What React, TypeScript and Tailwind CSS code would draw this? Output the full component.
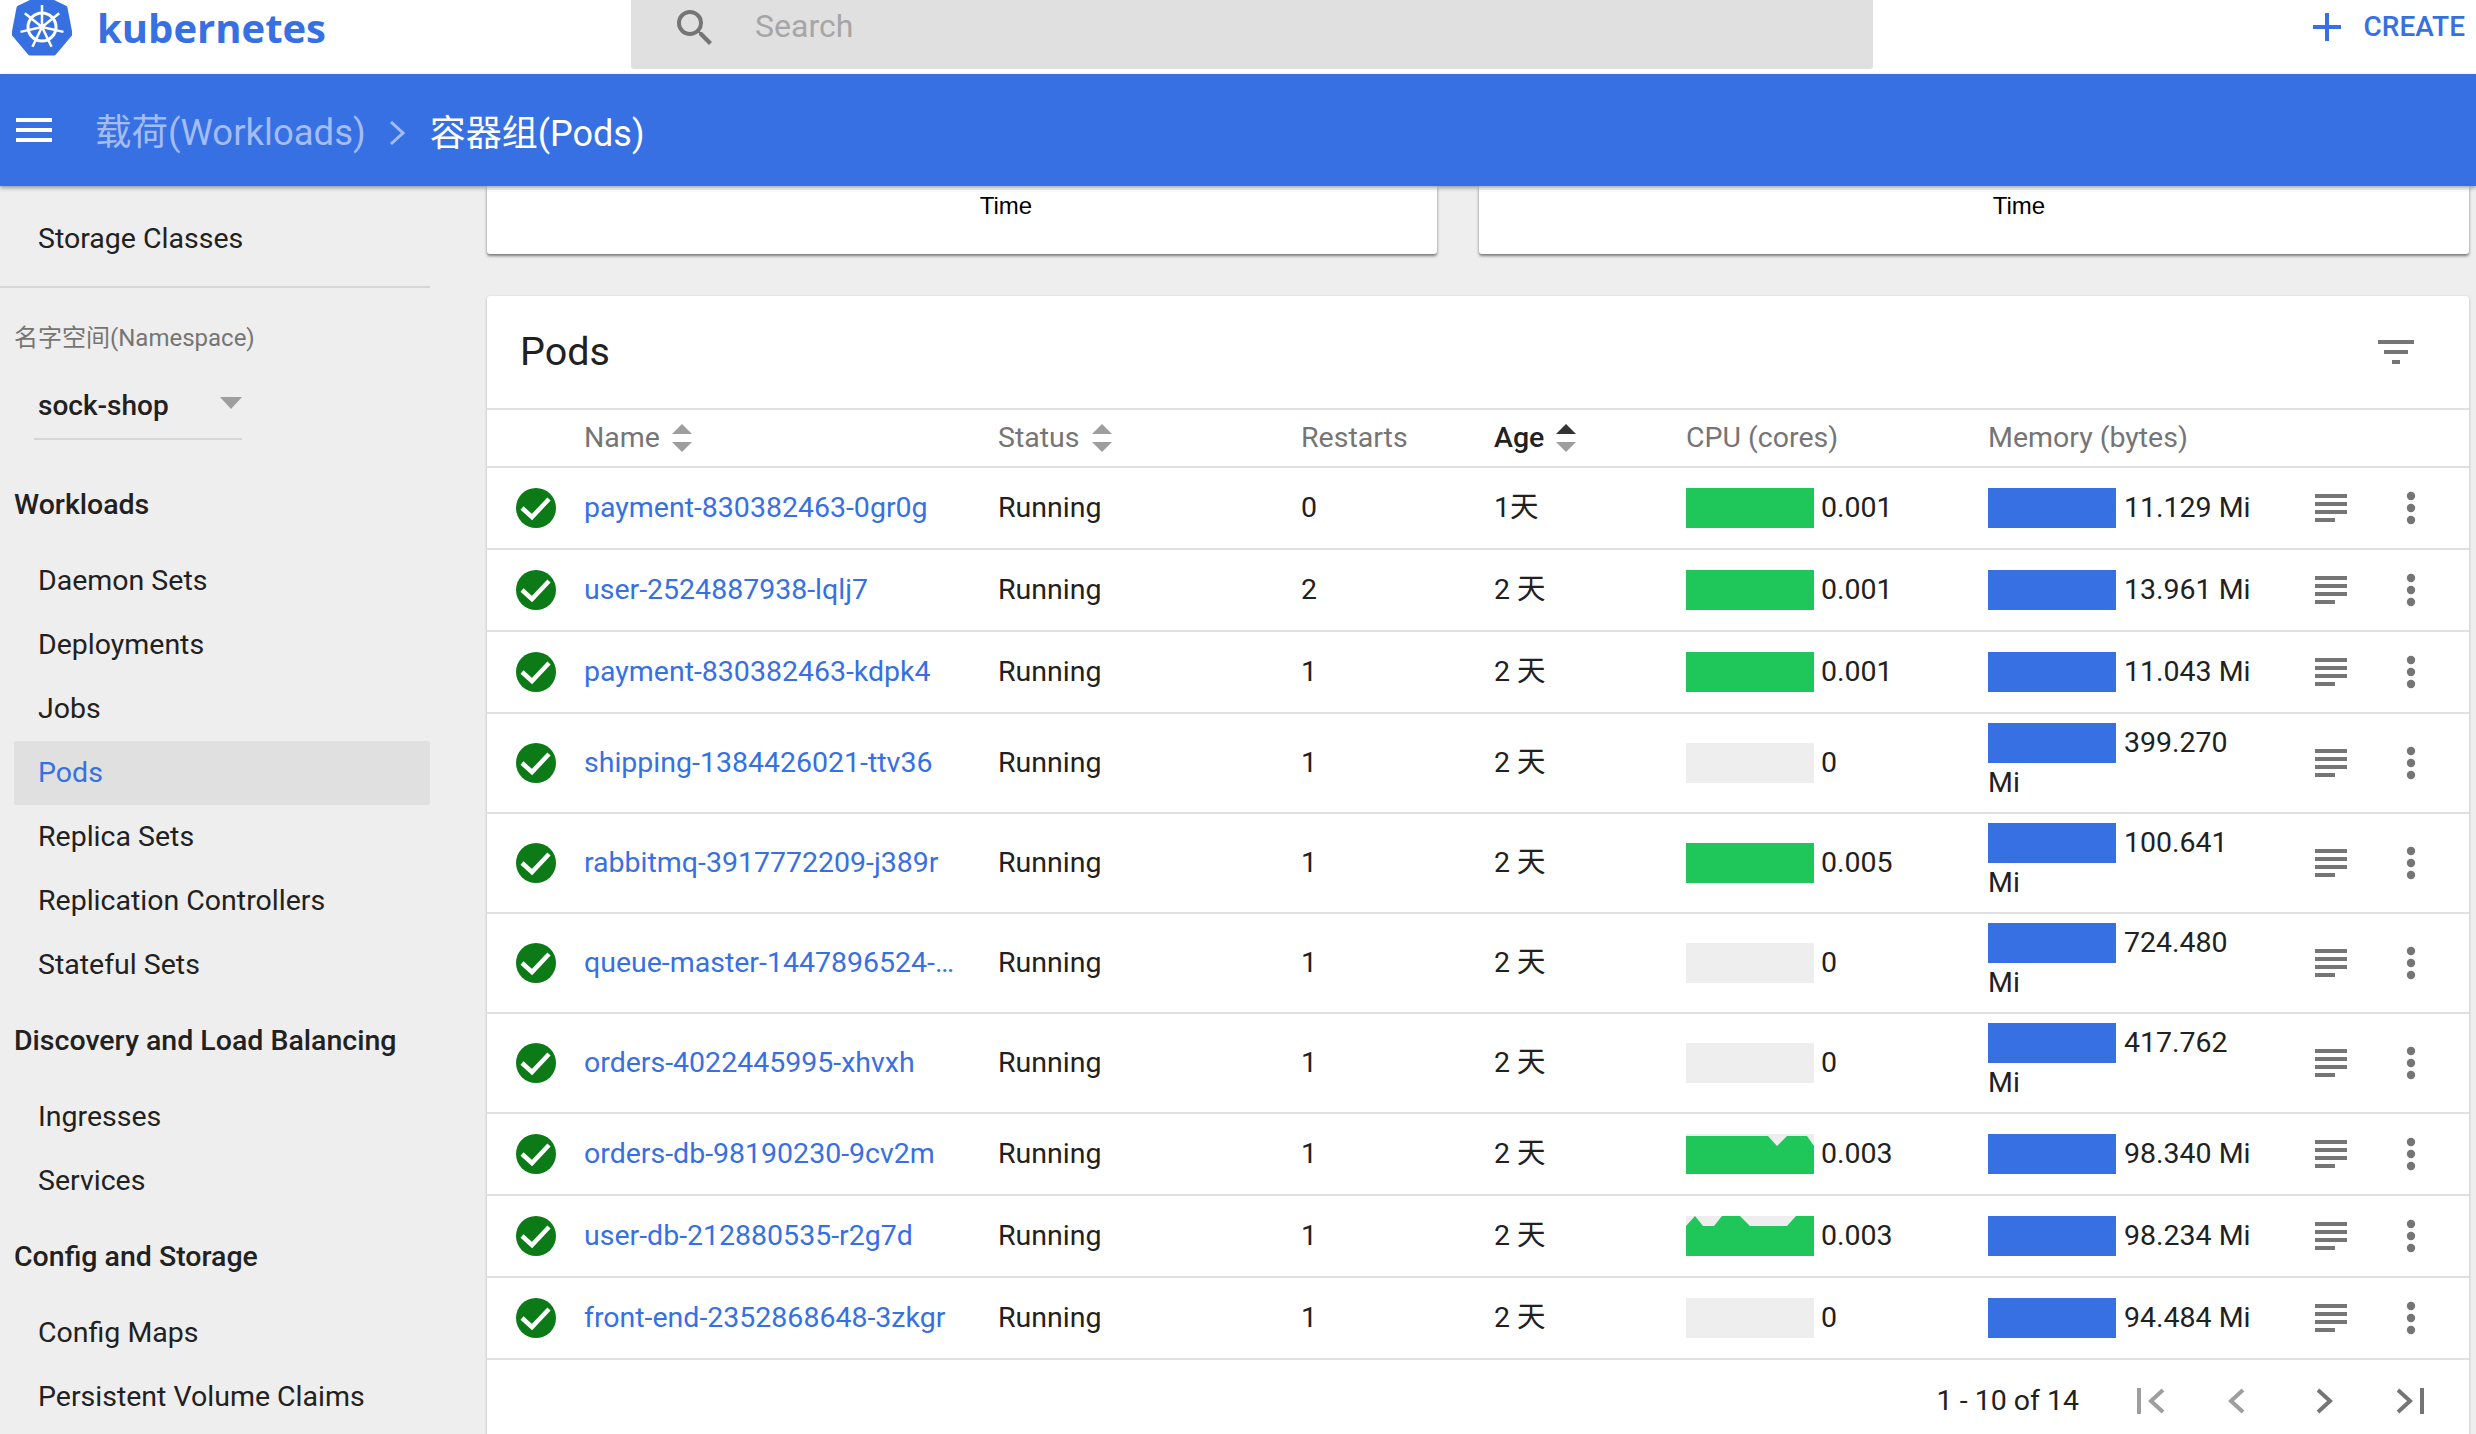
import React from 'react';

const COLS = 'grid grid-cols-[97px_414px_303px_193px_192px_302px_327px_1fr] items-center';

const NOTCH = '0,2 82,2 91,12 101,2 121,2 128,12 128,40 0,40';
const WAVY = '0,10 9,0 17,10 28,10 36,0 54,0 64,10 101,10 110,0 128,0 128,40 0,40';

type Pod = { name: string; restarts: number; age: string; cpu: string; mem: string; spark?: string | null };

const PODS: Pod[] = [
  { name: 'payment-830382463-0gr0g', restarts: 0, age: '1天', cpu: '0.001', mem: '11.129 Mi', spark: 'full' },
  { name: 'user-2524887938-lqlj7', restarts: 2, age: '2 天', cpu: '0.001', mem: '13.961 Mi', spark: 'full' },
  { name: 'payment-830382463-kdpk4', restarts: 1, age: '2 天', cpu: '0.001', mem: '11.043 Mi', spark: 'full' },
  { name: 'shipping-1384426021-ttv36', restarts: 1, age: '2 天', cpu: '0', mem: '399.270 Mi' },
  { name: 'rabbitmq-3917772209-j389r', restarts: 1, age: '2 天', cpu: '0.005', mem: '100.641 Mi', spark: 'full' },
  { name: 'queue-master-1447896524-…', restarts: 1, age: '2 天', cpu: '0', mem: '724.480 Mi' },
  { name: 'orders-4022445995-xhvxh', restarts: 1, age: '2 天', cpu: '0', mem: '417.762 Mi' },
  { name: 'orders-db-98190230-9cv2m', restarts: 1, age: '2 天', cpu: '0.003', mem: '98.340 Mi', spark: NOTCH },
  { name: 'user-db-212880535-r2g7d', restarts: 1, age: '2 天', cpu: '0.003', mem: '98.234 Mi', spark: WAVY },
  { name: 'front-end-2352868648-3zkgr', restarts: 1, age: '2 天', cpu: '0', mem: '94.484 Mi' },
];

// 로고
function Logo() {
  const spokes = [0, 1, 2, 3, 4, 5, 6].map((i) => (i * 360) / 7);
  return (
    <svg width="60" height="56" viewBox="12 0 60 56" className="shrink-0 overflow-hidden">
      <polygon
        points="42,-3 65,8 70,34 54,53 30,53 14,34 19,8"
        fill="#3670e2"
        stroke="#3670e2"
        strokeWidth="5"
        strokeLinejoin="round"
      />
      <circle cx="42" cy="27" r="14" fill="none" stroke="#fff" strokeWidth="3" />
      <circle cx="42" cy="27" r="3" fill="#fff" />
      {spokes.map((a) => (
        <line key={a} x1="42" y1="27" x2="42" y2="5" stroke="#fff" strokeWidth="2.5" transform={`rotate(${a} 42 27)`} />
      ))}
    </svg>
  );
}

function SortArrows({ active }: { active?: boolean }) {
  return (
    <svg width="20" height="28" viewBox="0 0 20 28" className="ml-[12px] shrink-0">
      <polygon points="10,0 20,10 0,10" fill={active ? '#333333' : '#9e9e9e'} />
      <polygon points="0,18 20,18 10,28" fill="#9e9e9e" />
    </svg>
  );
}

function CheckIcon() {
  return (
    <svg width="40" height="40" viewBox="0 0 40 40">
      <circle cx="20" cy="20" r="20" fill="#0b7a17" />
      <polyline points="6,20 16,29 33,11" fill="none" stroke="#fff" strokeWidth="4.5" />
    </svg>
  );
}

function Spark({ shape, color }: { shape?: string | null; color: string }) {
  return (
    <svg width="128" height="40" viewBox="0 0 128 40" className="inline-block align-top bg-[#eeeeee]">
      {shape === 'full' && <rect width="128" height="40" fill={color} />}
      {shape && shape !== 'full' && <polygon points={shape} fill={color} />}
    </svg>
  );
}

function ListIcon() {
  return (
    <svg width="32" height="28" viewBox="0 0 32 28" fill="#757575">
      <rect y="0" width="32" height="4" />
      <rect y="8" width="32" height="4" />
      <rect y="16" width="32" height="4" />
      <rect y="24" width="20" height="4" />
    </svg>
  );
}

function DotsIcon() {
  return (
    <svg width="10" height="34" viewBox="0 0 10 34" fill="#757575">
      <circle cx="5" cy="5" r="4.2" />
      <circle cx="5" cy="17" r="4.2" />
      <circle cx="5" cy="29" r="4.2" />
    </svg>
  );
}

function PodRow({ pod }: { pod: Pod }) {
  return (
    <div className={`${COLS} min-h-[82px] py-[9px] border-b-2 border-[#e0e0e0] text-[28.5px] text-[#212121]`}>
      <div className="pl-[29px] flex">
        <CheckIcon />
      </div>
      <a className="text-[#3670e2] whitespace-nowrap">{pod.name}</a>
      <div>Running</div>
      <div>{pod.restarts}</div>
      <div>{pod.age}</div>
      <div className="leading-[40px] whitespace-nowrap">
        <Spark shape={pod.spark} color="#1fc65a" />
        <span className="ml-[7px]">{pod.cpu}</span>
      </div>
      <div className="w-[270px] leading-[40px]">
        <Spark shape="full" color="#3670e2" />
        <span className="ml-[8px]">{pod.mem}</span>
      </div>
      <div className="flex items-center">
        <ListIcon />
        <div className="ml-[59px] flex">
          <DotsIcon />
        </div>
      </div>
    </div>
  );
}

function NavItem({ label, active }: { label: string; active?: boolean }) {
  return (
    <div
      className={[
        'h-[64px] flex items-center pl-[24px] ml-[14px] w-[416px] text-[28.5px] rounded-[2px]',
        active ? 'bg-[#e0e0e0] text-[#3670e2]' : 'text-[#212121]',
      ].join(' ')}
    >
      {label}
    </div>
  );
}

function NavTitle({ label }: { label: string }) {
  return <div className="h-[64px] flex items-center pl-[14px] text-[28.5px] font-medium text-[#212121]">{label}</div>;
}

function Sidebar() {
  return (
    <aside className="w-[487px] shrink-0 pt-[21px]">
      <NavItem label="Storage Classes" />
      <div className="h-[2px] w-[430px] mt-[15px] bg-[#d6d6d6]" />
      <div className="mt-[34px] pl-[14px] text-[24px] leading-[32px] text-[#757575]">名字空间(Namespace)</div>
      <div className="ml-[34px] mt-[20px] w-[208px] h-[66px] border-b-2 border-[#d6d6d6] pl-[4px] flex items-center justify-between text-[28px] font-medium text-[#212121]">
        sock-shop
        <svg width="22" height="12" viewBox="0 0 22 12" className="mb-[6px]">
          <polygon points="0,0 22,0 11,12" fill="#9e9e9e" />
        </svg>
      </div>
      <div className="mt-[33px]">
        <NavTitle label="Workloads" />
      </div>
      <div className="mt-[12px]">
        <NavItem label="Daemon Sets" />
        <NavItem label="Deployments" />
        <NavItem label="Jobs" />
        <NavItem label="Pods" active />
        <NavItem label="Replica Sets" />
        <NavItem label="Replication Controllers" />
        <NavItem label="Stateful Sets" />
      </div>
      <div className="mt-[12px]">
        <NavTitle label="Discovery and Load Balancing" />
      </div>
      <div className="mt-[12px]">
        <NavItem label="Ingresses" />
        <NavItem label="Services" />
      </div>
      <div className="mt-[12px]">
        <NavTitle label="Config and Storage" />
      </div>
      <div className="mt-[12px]">
        <NavItem label="Config Maps" />
        <NavItem label="Persistent Volume Claims" />
      </div>
    </aside>
  );
}

function ChartTail({ className }: { className: string }) {
  return (
    <div className={`${className} h-[68px] bg-white rounded-b-[3px] shadow-[0_2px_3px_rgba(0,0,0,0.5)] text-center text-black text-[24px] leading-[39px] [font-family:'Liberation_Sans',sans-serif]`}>
      Time
    </div>
  );
}

export default function App() {
  return (
    <div className="h-[1434px] w-[2476px] overflow-hidden bg-[#eeeeee] flex flex-col [font-family:Roboto,'Noto_Sans_CJK_SC',sans-serif]">
      {/* top bar */}
      <header className="h-[74px] bg-white flex items-start shrink-0">
        <div className="w-[631px] flex items-start pl-[12px] shrink-0">
          <Logo />
          <span className="ml-[25px] text-[40px] leading-[55px] font-bold text-[#3670e2] [font-family:'Open_Sans',sans-serif]">kubernetes</span>
        </div>
        <div className="w-[1242px] h-[69px] bg-[#e0e0e0] rounded-b-[3px] flex items-center pl-[40px] shrink-0">
          <svg width="48" height="48" viewBox="0 0 24 24" fill="#757575" className="mt-[-14px]">
            <path d="M15.5 14h-.79l-.28-.27A6.471 6.471 0 0 0 16 9.5 6.5 6.5 0 1 0 9.5 16c1.61 0 3.09-.59 4.23-1.57l.27.28v.79l5 4.99L20.49 19l-4.99-5zm-6 0C7.01 14 5 11.99 5 9.5S7.01 5 9.5 5 14 7.01 14 9.5 11.99 14 9.5 14z" />
          </svg>
          <span className="ml-[36px] mb-[17px] text-[32px] text-[#a6a6a6]">Search</span>
        </div>
        <div className="flex-1 flex items-center justify-end pr-[11px] h-[54px] text-[#3670e2]">
          <svg width="28" height="28" viewBox="0 0 28 28" stroke="#3670e2" strokeWidth="4">
            <line x1="14" y1="0" x2="14" y2="28" />
            <line x1="0" y1="14" x2="28" y2="14" />
          </svg>
          <span className="ml-[23px] text-[28px] font-medium">CREATE</span>
        </div>
      </header>

      {/* blue toolbar */}
      <div className="relative z-10 h-[112px] bg-[#3670e2] shadow-[0_2px_4px_rgba(0,0,0,0.35)] flex items-center shrink-0 pl-[16px] text-[36.5px]">
        <svg width="36" height="24" viewBox="0 0 36 24" fill="#fff">
          <rect width="36" height="4" />
          <rect y="10" width="36" height="4" />
          <rect y="20" width="36" height="4" />
        </svg>
        <span className="ml-[43px] pt-[6px] text-[#a3bcf4]">载荷(Workloads)</span>
        <svg width="16" height="26" viewBox="0 0 16 26" fill="none" stroke="#a3bcf4" strokeWidth="3" className="ml-[23px] mr-[25px] mt-[5px]">
          <polyline points="2,2 14,13 2,24" />
        </svg>
        <span className="pt-[7px] text-white text-[36px]">容器组(Pods)</span>
      </div>

      <div className="flex flex-1 min-h-0">
        <Sidebar />

        <main className="flex-1 min-w-0 pr-[7px]">
          <div className="flex gap-[42px]">
            <ChartTail className="w-[950px] pl-[88px]" />
            <ChartTail className="w-[990px] pl-[90px]" />
          </div>

          {/* pods table */}
          <section className="mt-[42px] bg-white rounded-t-[3px] shadow-[0_1px_3px_rgba(0,0,0,0.25)]">
            <div className="h-[114px] flex items-center justify-between pl-[33px] pr-[55px] border-b-2 border-[#e0e0e0]">
              <h2 className="text-[39.5px] text-[#212121]">Pods</h2>
              <svg width="36" height="24" viewBox="0 0 36 24" fill="#757575">
                <rect width="36" height="4" />
                <rect x="6" y="10" width="24" height="4" />
                <rect x="14" y="20" width="8" height="4" />
              </svg>
            </div>

            <div className={`${COLS} h-[58px] border-b-2 border-[#e0e0e0] text-[28.5px] text-[#757575]`}>
              <div />
              <div className="flex items-center">
                Name
                <SortArrows />
              </div>
              <div className="flex items-center">
                Status
                <SortArrows />
              </div>
              <div>Restarts</div>
              <div className="flex items-center font-medium text-[#212121]">
                Age
                <SortArrows active />
              </div>
              <div>CPU (cores)</div>
              <div>Memory (bytes)</div>
              <div />
            </div>

            {PODS.map((pod) => (
              <PodRow key={pod.name} pod={pod} />
            ))}

            <div className="h-[82px] flex items-center justify-end pr-[45px] text-[28.5px] text-[#212121]">
              <span>1 - 10 of 14</span>
              <svg width="28" height="26" viewBox="0 0 28 26" fill="none" stroke="#9e9e9e" strokeWidth="4" className="ml-[58px]">
                <line x1="2" y1="0" x2="2" y2="26" />
                <polyline points="26,2 14,13 26,24" />
              </svg>
              <svg width="18" height="26" viewBox="0 0 18 26" fill="none" stroke="#9e9e9e" strokeWidth="4" className="ml-[62px]">
                <polyline points="16,2 4,13 16,24" />
              </svg>
              <svg width="18" height="26" viewBox="0 0 18 26" fill="none" stroke="#757575" strokeWidth="4" className="ml-[71px]">
                <polyline points="2,2 14,13 2,24" />
              </svg>
              <svg width="28" height="26" viewBox="0 0 28 26" fill="none" stroke="#757575" strokeWidth="4" className="ml-[62px]">
                <polyline points="2,2 14,13 2,24" />
                <line x1="26" y1="0" x2="26" y2="26" />
              </svg>
            </div>
          </section>
        </main>
      </div>
    </div>
  );
}
